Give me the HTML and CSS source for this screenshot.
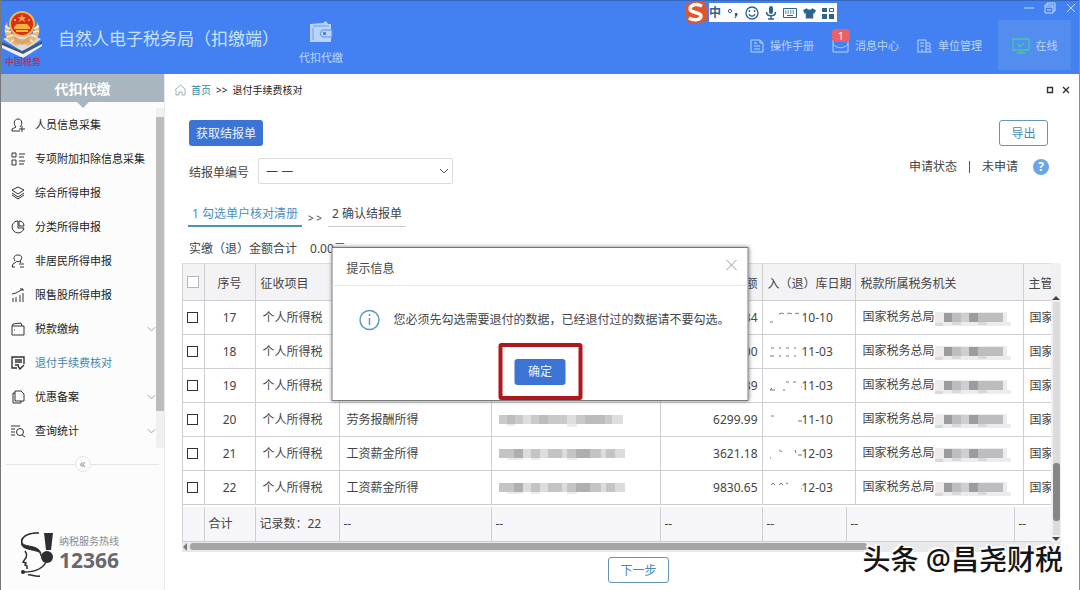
FILE: index.html
```html
<!DOCTYPE html>
<html lang="zh-CN">
<head>
<meta charset="utf-8">
<title>自然人电子税务局（扣缴端）</title>
<link rel="stylesheet" href="styles.css">
</head>
<body>
<svg class="defs" aria-hidden="true">
  <symbol id="chev" viewBox="0 0 10 6"><path d="M1 1l4 4 4-4" fill="none" stroke="currentColor"/></symbol>
  <symbol id="mosaic-a" viewBox="0 0 126 14">
    <path fill="#c9c9cb" d="M0 2h24v9H0zM32 2h36v9H32zM77 2h36v9H77z"/><path fill="#dededf" d="M24 2h8v9h-8zM68 2h9v9h-9zM113 2h11v9h-11z"/>
    <path fill="#bcbcbf" d="M8 2h8v9H8zM40 2h9v9h-9zM86 2h20v9H86z"/><path fill="#ececee" d="M8 11h8v2H8zM68 11h10v3H68z"/>
  </symbol>
  <symbol id="mosaic-b" viewBox="0 0 126 14">
    <path fill="#dcdcde" d="M0 2h126v9H0z"/><path fill="#c4c4c7" d="M0 2h24v9H0zM32 2h9v9h-9zM49 2h14v9H49zM68 2h34v9H68zM107 2h9v9h-9z"/>
    <path fill="#afafb2" d="M15 2h9v9h-9zM77 2h14v9H77z"/><path fill="#ececee" d="M8 11h16v2H8zM32 11h9v2h-9zM68 11h10v2H68z"/>
  </symbol>
  <symbol id="mosaic-c" viewBox="0 0 76 18">
    <path fill="#ececee" d="M0 3h72v10h4v4H0z"/><path fill="#bdbdc0" d="M9 4h59v9H9z"/><path fill="#9c9ca0" d="M9 4h8v9H9zM34 4h9v9h-9z"/>
    <path fill="#d9d9db" d="M17 13h9v3h-9zM43 13h9v3h-9zM0 14h8v3H0z"/><path fill="#cfcfd2" d="M26 4h8v9h-8z"/>
  </symbol>
</svg>
<div class="app">
  <header class="top">
    <svg class="emblem" viewBox="0 0 42 58" aria-label="中国税务">
      <path d="M2 30 20 22l20 8-18 13z" fill="#d7dce4"/><path d="M1 33l20 9 20-10v3L22 46 1 36z" fill="#41577c"/>
      <path d="M1 36l21 9 19-10v2L22 49 1 39z" fill="#eef2f6"/>
      <path d="M6 13C1 22 4 31 15 37l6-3 6 3c11-6 14-15 9-24-1 9-5 15-13 17h-4C12 28 7 22 6 13z" fill="#e9b877"/>
      <path d="M4 17l5 3M4 22l6 1M6 28l6-2M10 33l5-4M38 17l-5 3M38 22l-6 1M36 28l-6-2M32 33l-5-4" stroke="#fdf0d4" stroke-width="1.500" fill="none"/>
      <circle cx="21" cy="15" r="13" fill="#f2b94a"/><circle cx="21" cy="15" r="11" fill="#dc2c1c"/>
      <path d="M21 5l1 3h3l-2 2 1 3-3-2-3 2 1-3-2-2h3zM13 18l3-3h10l3 3v2H13zM15 21h12v2H15z" fill="#f8b23c"/>
      <circle cx="14" cy="11" r="1" fill="#f8cf4c"/><circle cx="28" cy="11" r="1" fill="#f8cf4c"/>
      <path d="M13 27l8 5 8-5v6l-8 3-8-3z" fill="#dfa468"/>
      <text x="4" y="56" class="emblem-text">中国税务</text>
    </svg>
    <h1 class="title">自然人电子税务局（扣缴端）</h1>
    <a class="module" href="#">
      <svg width="24" height="22" viewBox="0 0 24 22"><path d="M1 3l13-1 3-2 2 3h3v6h1v8h-1v4H1z" fill="#b9d4fb"/><path d="M4 5h16M4 7v12" stroke="#6a9cf5"/><path d="M13 9h10v7H13l-2-3z" fill="#b9d4fb" stroke="#5b90ee"/><path d="M14 11h3v3h-3z" fill="#4c83e6"/></svg>
      <span>代扣代缴</span>
    </a>
    <nav class="tools">
      <a href="#"><svg width="14" height="14" viewBox="0 0 14 14"><path d="M1 1h9l3 3v9H1zM10 1v3h3M4 4h3M4 7h6M4 10h6" fill="none" stroke="currentColor"/></svg>操作手册</a>
      <a href="#" class="msg"><svg width="17" height="14" viewBox="0 0 17 14"><path d="M1 1h15v12H1zM1 5c4 5 11 5 15 0" fill="none" stroke="currentColor"/></svg><span class="badge">1</span>消息中心</a>
      <a href="#"><svg width="15" height="14" viewBox="0 0 15 14"><path d="M1 13V1h8v12M9 4h4v9M0 13h15M3 4h4M3 7h4M5 10v3M9 7h3M9 10h3" fill="none" stroke="currentColor"/></svg>单位管理</a>
      <a href="#" class="online"><svg width="18" height="16" viewBox="0 0 18 16"><path d="M1 1h16v11H1zM5 15h8M9 12v3M6 6l2 3 4-4" fill="none" stroke="#3fc9a8" stroke-width="1.400"/></svg>在线</a>
    </nav>
    <div class="winctl">
      <button aria-label="最小化"><svg width="12" height="12" viewBox="0 0 12 12"><path d="M1 6h10" stroke="currentColor"/></svg></button>
      <button aria-label="还原"><svg width="12" height="12" viewBox="0 0 12 12"><path d="M1 3h8v8H1zM3 3V1h8v8H9M1 5h8M3 8h4" fill="none" stroke="currentColor"/></svg></button>
      <button aria-label="关闭"><svg width="12" height="12" viewBox="0 0 12 12"><path d="M2 2l8 8M10 2l-8 8" stroke="currentColor"/></svg></button>
    </div>
    <div class="ime">
      <svg class="sogou" width="24" height="23" viewBox="0 0 24 23"><path d="M3 2l16-2 3 3 2 14-3 4-15 2-3-3L1 6z" fill="#e0552c"/><path d="M18 5C12 2 6 4 6 8s11 3 11 7-7 5-12 2" fill="none" stroke="#fff" stroke-width="3.400"/></svg>
      <span class="zh">中</span>
      <svg width="12" height="12" viewBox="0 0 12 12"><circle cx="3" cy="4" r="1.600" fill="none" stroke="currentColor"/><path d="M8 6h2.500v2L8.500 11H7.500L8.500 9H8z" fill="currentColor"/></svg>
      <svg width="14" height="14" viewBox="0 0 14 14"><circle cx="7" cy="7" r="6" fill="none" stroke="currentColor" stroke-width="1.300"/><path d="M4.500 4v2M9.500 4v2M4 8c1 3 5 3 6 0" fill="none" stroke="currentColor" stroke-width="1.300"/></svg>
      <svg width="12" height="14" viewBox="0 0 12 14"><rect x="4" y="0" width="4" height="8" rx="2" fill="currentColor"/><path d="M1.500 6c0 5 9 5 9 0M6 10v3M3 13h6" fill="none" stroke="currentColor" stroke-width="1.500"/></svg>
      <svg width="14" height="12" viewBox="0 0 14 12"><path d="M.5 1.500h13v9H.5z" fill="none" stroke="currentColor"/><path d="M2 4h10M2 6h10" stroke="currentColor" stroke-dasharray="1.500 1"/><path d="M4 8.500h6" stroke="currentColor"/></svg>
      <svg width="13" height="12" viewBox="0 0 14 12"><path d="M4 1c1 2 5 2 6 0l4 2-2 4-1-1v6H3V6L2 7 0 3z" fill="currentColor"/></svg>
      <svg width="12" height="12" viewBox="0 0 12 12"><path d="M0 1h5v4H0zM0 7h5v5H0zM7 7h5v5H7z" fill="currentColor"/><path d="M7.500 1.500h4v3h-4z" fill="none" stroke="currentColor"/></svg>
    </div>
  </header>

  <div class="body">
    <aside class="side">
      <h2 class="side-head">代扣代缴</h2>
      <div class="side-scroll">
        <ul class="menu">
          <li><a href="#"><svg viewBox="0 0 14 14"><path d="M5 9C2 6 3 1 7 1s5 5 2 8M5 9l-4 2v2h8M11 8v6M8 11h6"/></svg>人员信息采集</a></li>
          <li><a href="#"><svg viewBox="0 0 14 14"><path d="M1 1h4v4H1zM1 8h4v5H1zM8 2h6M8 5h5M8 9h6M8 12h5"/></svg>专项附加扣除信息采集</a></li>
          <li><a href="#"><svg viewBox="0 0 14 14"><path d="M7 1l6 3-6 4-6-4zM1 7l6 4 6-4M1 9l6 4 6-4"/></svg>综合所得申报</a></li>
          <li><a href="#"><svg viewBox="0 0 14 14"><path d="M6 1a6 6 0 1 0 7 7H7V1zM8 1v5h5c0-3-2-5-5-5z"/></svg>分类所得申报</a></li>
          <li><a href="#"><svg viewBox="0 0 14 14"><path d="M4 7c-2-3-1-6 3-6s5 3 2 6c-1 1-3 1-4 0M5 8l-3 2-1 3h3M9 7l1 2M8 10h5M9 13h4"/></svg>非居民所得申报</a></li>
          <li><a href="#"><svg viewBox="0 0 14 14"><path d="M1 6l4-1 7-4M9 1h3v2M2 10v4M5 9v5M9 7v7M12 5v9"/></svg>限售股所得申报</a></li>
          <li><a href="#"><svg viewBox="0 0 14 14"><path d="M1 4h12v9H1zM1 4l1-2 8-1 1 3M3 8h1"/></svg>税款缴纳<svg class="chev"><use href="#chev"/></svg></a></li>
          <li><a href="#" class="active"><svg viewBox="0 0 14 14"><path d="M6 12H1V1h12v7M4 4h7M4 6h7M4 9h4M7 10l2 3 4-4" stroke-width="1.400"/></svg>退付手续费核对</a></li>
          <li><a href="#"><svg viewBox="0 0 14 14"><path d="M4 1h6l3 3v7H4zM4 3H2v10h8v-2"/></svg>优惠备案<svg class="chev"><use href="#chev"/></svg></a></li>
          <li><a href="#"><svg viewBox="0 0 14 14"><path d="M0 2h9M0 5h4M0 8h4M0 11h4M11 11l3 2"/><circle cx="9" cy="8" r="3.500"/></svg>查询统计<svg class="chev"><use href="#chev"/></svg></a></li>
        </ul>
        <div class="side-bar"><span class="side-thumb"></span></div>
      </div>
      <div class="fold"><button aria-label="收起">«</button></div>
      <div class="hotline">
        <svg width="34" height="46" viewBox="0 0 34 46"><path d="M18 1C9 1 1 4 1 10c0 5 13 3 17 8 2 2 2 4 2 6 0-2-2-5-5-5C8 17 0 17 0 10 0 4 8 0 18 1z" fill="#2e2e30" stroke="#2e2e30"/><path d="M23 1h9l-2 17h-5z" fill="#2e2e30"/><circle cx="26" cy="25" r="6" fill="#2e2e30"/><path d="M4 19c2 3 2 6 0 8l-2 3 3 1-1 2 2 1v3M25 30c-4 8-12 10-22 10M7 43c3-1 7 2 12 1" fill="none" stroke="#2e2e30" stroke-width="1.500"/><circle cx="2" cy="40" r="2" fill="#2e2e30"/></svg>
        <p><span>纳税服务热线</span><strong>12366</strong></p>
      </div>
    </aside>

    <main class="main">
      <div class="crumbs">
        <svg width="13" height="12" viewBox="0 0 13 12"><path d="M1 6l5.500-5L12 6M2 6v5h3V8h3v3h3V6" fill="none" stroke="#9dafb5"/></svg>
        <a href="#">首页</a><span class="sep">&gt;&gt;</span><span>退付手续费核对</span>
        <div class="pagectl">
          <button aria-label="最大化"><svg width="8" height="8" viewBox="0 0 8 8"><path d="M1.500 1.500h5v5h-5z" fill="none" stroke="#333" stroke-width="1.400"/></svg></button>
          <button aria-label="关闭页签"><svg width="8" height="8" viewBox="0 0 8 8"><path d="M1 1l6 6M7 1L1 7" stroke="#333" stroke-width="1.400"/></svg></button>
        </div>
      </div>

      <div class="bar">
        <button class="btn primary">获取结报单</button>
        <button class="btn ghost">导出</button>
      </div>
      <div class="filter">
        <label for="no">结报单编号</label>
        <span class="pick"><select id="no"><option>— —</option></select><svg class="arrow"><use href="#chev"/></svg></span>
        <p class="status"><span>申请状态</span><i></i><span>未申请</span><button class="help" aria-label="帮助">?</button></p>
      </div>
      <nav class="steps"><a href="#" class="on">1 勾选单户核对清册</a><span>&gt; &gt;</span><a href="#">2 确认结报单</a></nav>
      <p class="sum"><span>实缴（退）金额合计</span><span>0.00元</span></p>

      <div class="grid">
        <div class="view">
          <table class="data">
            <colgroup><col class="c1"><col class="c2"><col class="c3"><col class="c4"><col class="c5"><col class="c6"><col class="c7"><col class="c8"><col class="c9"></colgroup>
            <thead><tr><th><input type="checkbox" aria-label="全选"></th><th class="mid">序号</th><th class="tight">征收项目</th><th></th><th></th><th class="num">额</th><th class="tight">入（退）库日期</th><th class="tight">税款所属税务机关</th><th class="tight">主管</th></tr></thead>
            <tbody>
              <tr><td><input type="checkbox" aria-label="选择17"></td><td class="mid">17</td><td>个人所得税</td><td></td><td></td><td class="num">34</td><td><svg class="mark" viewBox="0 0 32 12"><path d="M0 10h3M9 2l3-1 2 1M17 2l2-1 3 1M25 2l2-1 2 1"/></svg>10-10</td><td>国家税务总局<svg class="mo"><use href="#mosaic-c"/></svg></td><td>国家</td></tr>
              <tr><td><input type="checkbox" aria-label="选择18"></td><td class="mid">18</td><td>个人所得税</td><td></td><td></td><td class="num">00</td><td><svg class="mark" viewBox="0 0 32 12"><path d="M1 2h3M9 2h2M16 2h3M24 2h2M0 10h4M9 10h2M16 10h3M24 10h2"/></svg>11-03</td><td>国家税务总局<svg class="mo"><use href="#mosaic-c"/></svg></td><td>国家</td></tr>
              <tr><td><input type="checkbox" aria-label="选择19"></td><td class="mid">19</td><td>个人所得税</td><td></td><td></td><td class="num">39</td><td><svg class="mark" viewBox="0 0 32 12"><path d="M0 10l2-2M0 10h5M16 2h3M23 2h3M13 10h2M31 7h1"/></svg>11-03</td><td>国家税务总局<svg class="mo"><use href="#mosaic-c"/></svg></td><td>国家</td></tr>
              <tr><td><input type="checkbox" aria-label="选择20"></td><td class="mid">20</td><td>个人所得税</td><td>劳务报酬所得</td><td><svg class="mb"><use href="#mosaic-a"/></svg></td><td class="num">6299.99</td><td><svg class="mark" viewBox="0 0 32 12"><path d="M1 2h3M28 7h4"/></svg>11-10</td><td>国家税务总局<svg class="mo"><use href="#mosaic-c"/></svg></td><td>国家</td></tr>
              <tr><td><input type="checkbox" aria-label="选择21"></td><td class="mid">21</td><td>个人所得税</td><td>工资薪金所得</td><td><svg class="mb"><use href="#mosaic-b"/></svg></td><td class="num">3621.18</td><td><svg class="mark" viewBox="0 0 32 12"><path d="M0 10h1M9 2l3 2M25 2l1 3M28 7h4"/></svg>12-03</td><td>国家税务总局<svg class="mo"><use href="#mosaic-c"/></svg></td><td>国家</td></tr>
              <tr><td><input type="checkbox" aria-label="选择22"></td><td class="mid">22</td><td>个人所得税</td><td>工资薪金所得</td><td><svg class="mb"><use href="#mosaic-b"/></svg></td><td class="num">9830.65</td><td><svg class="mark" viewBox="0 0 32 12"><path d="M1 3l2-2 2 2M9 3l2-2 2 2M16 2l2-1M31 7h1"/></svg>12-03</td><td>国家税务总局<svg class="mo"><use href="#mosaic-c"/></svg></td><td>国家</td></tr>
            </tbody>
          </table>
          <table class="data foot">
            <colgroup><col class="c1"><col class="c2"><col class="c3"><col class="c4"><col class="c5"><col class="c6"><col class="f7"><col class="c8"><col class="c9"></colgroup>
            <tbody><tr><td></td><td>合计</td><td>记录数：22</td><td>--</td><td>--</td><td>--</td><td>--</td><td>--</td><td>--</td></tr></tbody>
          </table>
        </div>
        <div class="vbar"><svg width="8" height="5" viewBox="0 0 8 5"><path d="M0 5l4-4 4 4z" fill="#444"/></svg><div class="vtrack"><span class="vthumb"></span></div><svg width="8" height="5" viewBox="0 0 8 5"><path d="M0 0h8L4 4z" fill="#444"/></svg></div>
        <div class="hbar"><svg width="5" height="8" viewBox="0 0 5 8"><path d="M5 0v8L1 4z" fill="#777"/></svg><span class="hthumb"></span></div>
      </div>
      <div class="next"><button class="btn ghost wide">下一步</button></div>
    </main>
  </div>

  <section class="dialog" role="dialog" aria-labelledby="dt">
    <header class="dlg-head"><h3 id="dt">提示信息</h3><button aria-label="关闭提示"><svg width="12" height="12" viewBox="0 0 12 12"><path d="M1 1l10 10M11 1L1 11" stroke="#999"/></svg></button></header>
    <p class="dlg-text"><svg width="22" height="22" viewBox="0 0 22 22"><circle cx="11" cy="11" r="9.500" fill="none" stroke="#5b9bc4" stroke-width="1.500"/><path d="M11 9v7M11 5v2" stroke="#5b9bc4" stroke-width="1.500"/></svg>您必须先勾选需要退付的数据，已经退付过的数据请不要勾选。</p>
    <div class="dlg-foot"><span class="mark-box"><button class="btn primary ok">确定</button></span></div>
  </section>
  <div class="watermark">头条 @昌尧财税</div>
</div>
</body>
</html>
```
FILE: styles.css
```css
* { box-sizing: border-box; }
body, h1, h2, h3, p, ul { margin: 0; padding: 0; font-weight: normal; }
body { font: 12px/18px "Noto Sans", "Noto Sans CJK SC", sans-serif; color: #444; background: #fff; }
button { border: 0; padding: 0; background: none; font: inherit; color: inherit; cursor: pointer; }
a { color: inherit; text-decoration: none; }
ul { list-style: none; }
svg { flex: none; }
.defs { position: absolute; width: 0; height: 0; }
.app { position: relative; min-height: 100vh; display: flex; flex-direction: column; overflow: hidden; border-left: 1px solid #77787c; border-right: 1px solid #8a8c92; }

.top { position: relative; display: flex; align-items: center; height: 74px; background: #4381f2; border-top: 1px solid #3467bd; color: #b9d5fc; font-size: 11px; }
.emblem { width: 42px; height: 58px; }
.emblem-text { font-size: 9px; font-weight: bold; fill: #a83a66; }
.title { margin-left: 15px; font-size: 17px; line-height: 26px; color: #c8e2fd; white-space: nowrap; padding-top: 3px; }
.module { display: flex; flex-direction: column; align-items: center; gap: 6px; margin-left: 20px; padding-top: 12px; }
.tools { display: flex; align-items: center; gap: 18px; margin-left: auto; padding: 14px 8px 0 0; white-space: nowrap; }
.tools a { position: relative; display: flex; align-items: center; gap: 6px; padding-top: 2px; }
.tools .online { width: 73px; height: 50px; justify-content: center; margin-left: -2px; padding: 2px 0 0; background: #548df0; }
.badge { position: absolute; left: 0; top: -6px; width: 18px; height: 13px; border-radius: 4px; background: #ec5f64; color: #fff; font-size: 11px; line-height: 13px; text-align: center; }
.winctl { position: absolute; right: 2px; top: 1px; display: flex; gap: 9px; color: #c5dbfb; }
.winctl button { display: flex; }
.ime { position: absolute; left: 708px; top: 2px; display: flex; align-items: center; gap: 6px; height: 19px; padding: 0 3px 0 2px; background: #fff; color: #2b648f; }
.ime .zh { font-size: 12px; font-weight: bold; line-height: 19px; }
.sogou { margin: 0 -5px 0 -27px; }

.body { flex: 1; display: flex; }
.side { width: 164px; flex: none; display: flex; flex-direction: column; border-right: 1px solid #e6e8ea; background: #fcfcfd; }
.side-head { position: relative; height: 28px; background: #a9b5bf; color: #fff; font-size: 14px; line-height: 30px; font-weight: bold; text-align: center; }
.side-head::after { content: ""; position: absolute; left: 76px; top: 28px; border: 6px solid transparent; border-top-color: #a9b5bf; border-bottom: 0; }
.side-scroll { display: flex; margin-top: 6px; }
.menu { flex: 1; color: #222; font-size: 11px; }
.menu a { display: flex; align-items: center; gap: 10px; height: 34px; padding: 0 0 0 10px; white-space: nowrap; }
.menu svg { width: 14px; height: 14px; fill: none; stroke: #333; }
.menu .chev { width: 9px; height: 6px; margin-left: auto; color: #999; stroke: none; }
.menu .active { color: #3e86ae; }
.side-bar { width: 8px; background: #f0f0f1; padding-top: 9px; }
.side-thumb { display: block; height: 294px; background: #bcbcbd; }
.fold { display: flex; align-items: center; height: 16px; margin: 8px 5px 0; }
.fold::before, .fold::after { content: ""; flex: 1; height: 1px; background: #e4e5e8; }
.fold button { width: 16px; height: 16px; border: 1px solid #e4e5e8; border-radius: 50%; font-size: 12px; line-height: 12px; color: #999; }
.hotline { display: flex; gap: 4px; margin: auto 0 13px 20px; color: #8b8b8d; font-size: 10px; line-height: 14px; }
.hotline p { display: flex; flex-direction: column; padding-top: 2px; }
.hotline strong { font-size: 21px; line-height: 24px; color: #69696b; }

.main { flex: 1; min-width: 0; padding: 0 18px 8px 17px; }
.crumbs { display: flex; align-items: center; height: 32px; margin-left: -8px; color: #222; font-size: 10px; }
.crumbs a { margin-left: 4px; color: #308ba5; }
.crumbs .sep { margin: 0 5px; }
.pagectl { display: flex; gap: 8px; margin-left: auto; margin-right: -9px; }
.pagectl button { display: flex; }
.btn { height: 26px; border-radius: 3px; padding: 1px 7px 0; line-height: 24px; white-space: nowrap; }
.primary { background: #3b74d4; color: #e8f3ff; }
.ghost { border: 1px solid #6695ba; color: #438cb8; background: #fff; width: 49px; }
.bar { display: flex; justify-content: space-between; margin-top: 14px; padding: 0 13px 0 7px; }
.filter { display: flex; align-items: center; gap: 9px; height: 26px; margin-top: 12px; padding: 0 12px 0 7px; }
.filter label { padding-top: 3px; }
.pick { position: relative; width: 195px; }
.pick select { display: block; width: 100%; height: 26px; appearance: none; border: 1px solid #dcdcde; border-radius: 2px; padding: 0 7px; background: #fff; font: inherit; color: inherit; }
.arrow { position: absolute; right: 4px; top: 10px; width: 10px; height: 6px; color: #555; pointer-events: none; }
.status { display: flex; align-items: center; gap: 12px; margin: -8px 0 0 auto; }
.status i { width: 1px; height: 12px; background: #555; }
.help { width: 16px; height: 16px; margin-left: 3px; border-radius: 50%; background: #69a5e8; color: #fff; font-weight: bold; line-height: 16px; }
.steps { display: flex; align-items: flex-end; gap: 4px; margin-top: 21px; padding-left: 6px; }
.steps a { height: 22px; padding: 0 4px; border-bottom: 1px solid #c5c9cd; }
.steps .on { color: #4a8fc4; border-bottom: 2px solid #4d94ae; }
.steps span { width: 18px; text-align: center; white-space: nowrap; font-size: 10px; }
.sum { display: flex; gap: 13px; padding: 13px 0 5px 7px; }

.grid { display: grid; grid-template-columns: 1fr 10px; }
.view { min-width: 0; overflow: hidden; border-left: 1px solid #cfcfd2; }
.data { width: 100%; table-layout: fixed; border-collapse: collapse; }
.c1 { width: 21px; } .c2 { width: 51px; } .c3 { width: 84px; } .c4 { width: 152px; } .c5 { width: 169px; }
.c6 { width: 102px; } .c7 { width: 93px; } .f7 { width: 84px; } .c8 { width: 168px; } .c9 { width: auto; }
.data th, .data td { height: 34px; padding: 0 0 0 7px; border: 1px solid #cfcfd2; border-width: 0 1px 1px 0; font-weight: normal; text-align: left; white-space: nowrap; vertical-align: middle; }
.data th { height: 37px; padding-top: 3px; background: #f3f3f6; border-top: 1px solid #dedee1; }
.data th:last-child, .data td:last-child { border-right: 0; overflow: hidden; }
.data .tight { padding-left: 5px; }
.data .mid { padding-left: 0; text-align: center; }
.data .num { padding-left: 0; padding-right: 4px; text-align: right; }
.data th:first-child, .data td:first-child { padding: 0 0 0 4px; }
.data input { appearance: none; display: block; width: 11px; height: 11px; margin: 0; border: 1px solid #333; background: #fff; }
.data th input { width: 12px; height: 12px; border-color: #b5b5b8; }
.data td:last-child { padding-left: 6px; }
.mark { width: 32px; height: 12px; fill: none; stroke: #777; vertical-align: middle; }
.mo { width: 76px; height: 18px; vertical-align: middle; }
.mb { width: 126px; height: 14px; display: block; }
.data.foot { margin-top: 2px; }
.data.foot td { background: #f5f5fa; padding-left: 4px; }
.vbar { display: flex; flex-direction: column; align-items: center; background: #f0f0f2; padding-top: 32px; }
.vtrack { flex: 1; width: 7px; margin: 2px 0; background: #dcdcde; display: flex; align-items: flex-end; padding-bottom: 14px; }
.vthumb { width: 7px; height: 58px; border-radius: 3px; background: #868688; }
.hbar { grid-column: 1 / 3; display: flex; align-items: center; gap: 3px; height: 10px; background: #e9e9eb; }
.hthumb { width: 77%; height: 7px; border-radius: 3px; background: #a5a5a6; }
.next { display: flex; justify-content: center; padding: 5px 0 0 34px; }
.wide { width: 61px; }

.dialog { position: absolute; left: 50%; top: 247px; width: 417px; transform: translateX(-50%); background: #fff; border: 1px solid #77787a; box-shadow: 0 0 4px rgba(0, 0, 0, .5); }
.dlg-head { display: flex; align-items: center; justify-content: space-between; height: 38px; padding: 0 10px 0 14px; border-bottom: 1px solid #ebebed; }
.dlg-head h3 { font-size: 12px; padding-top: 4px; }
.dlg-text { display: flex; align-items: center; gap: 13px; padding: 23px 0 0 26px; white-space: nowrap; }
.dlg-foot { display: flex; justify-content: center; padding-top: 12px; }
.mark-box { display: flex; align-items: center; justify-content: center; width: 84px; height: 57px; border: 4px solid #ad171d; border-radius: 3px; }
.ok { width: 51px; }
.watermark { position: absolute; right: 16px; bottom: 13px; font-size: 28px; line-height: 38px; font-weight: 500; color: #161616; white-space: nowrap; text-shadow: -1px -1px 0 #fff, 1px -1px 0 #fff, -1px 1px 0 #fff, 1px 1px 0 #fff, -2px -2px 0 #fff; }
```
